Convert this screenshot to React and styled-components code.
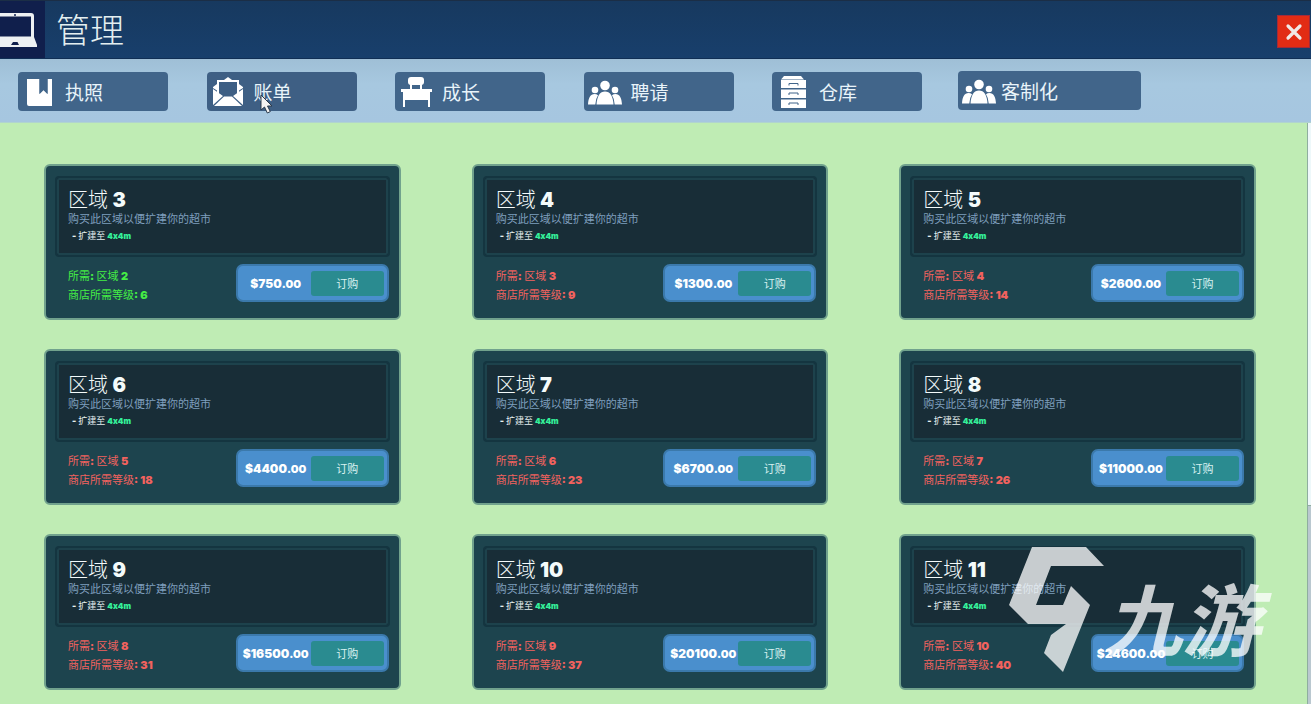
import styled, { createGlobalStyle } from 'styled-components';

const AREAS = [
  { id: 3, level: 6, price: 750, unlocked: true },
  { id: 4, level: 9, price: 1300 },
  { id: 5, level: 14, price: 2600 },
  { id: 6, level: 18, price: 4400 },
  { id: 7, level: 23, price: 6700 },
  { id: 8, level: 26, price: 11000 },
  { id: 9, level: 31, price: 16500 },
  { id: 10, level: 37, price: 20100 },
  { id: 11, level: 40, price: 24600 },
];

const LaptopIcon = () => (
  <LaptopSvg viewBox="0 0 48 36" aria-hidden="true">
    <path
      fillRule="evenodd"
      d="M10 1h32q3 0 3 3v21l3 8v2H1v-2l6-8V4q0-3 3-3zM11 4.500v20h31v-20zM24 30l-2 3h8l-1.500-3z"
    />
    <circle cx="26" cy="3" r="1" fill="#101f4c" />
  </LaptopSvg>
);

const BookIcon = () => (
  <TabSvg viewBox="0 0 34 34" aria-hidden="true">
    <path d="M5 4h12.500v15l4-4 4 4V4h4.500v27H7q-2 0-2-2z" />
    <path d="M17.500 4h8v15l-4-4-4 4z" fill="#41658a" />
  </TabSvg>
);

const MailIcon = () => (
  <TabSvg viewBox="0 0 34 34" aria-hidden="true">
    <path d="M13 5l4-3 4 3z" />
    <path d="M7 19V6h20v13" fill="none" stroke="#fff" strokeWidth="2" />
    <path d="M2 12l4-3v6.500L2 13zM32 12l-4-3v6.500l4-2.500z" />
    <path d="M2 14l10 7L2 30zM32 14l-10 7 10 9z" />
    <path d="M3 31l10-9.500h8L31 31z" />
  </TabSvg>
);

const DeskIcon = () => (
  <TabSvg viewBox="0 0 34 34" aria-hidden="true">
    <rect x="9" y="2" width="16" height="8" rx="3" />
    <path d="M11 9h2v5h-2zM21 9h2v5h-2z" />
    <path d="M2 14h31v3h-2v15h-2v-7H6v7H4V17H2z" />
  </TabSvg>
);

const PeopleIcon = () => (
  <TabSvg viewBox="0 0 34 34" aria-hidden="true">
    <circle cx="17" cy="10.500" r="4.800" />
    <circle cx="7" cy="15" r="3.300" />
    <circle cx="27" cy="15" r="3.300" />
    <path d="M8.500 29.500C9 21 12 16.500 17 16.500s8 4.500 8.500 13z" />
    <path d="M0 29.500C.3 23 2.500 19 6.500 19q2 0 3.500 1.200Q7.400 24 7.300 29.500zM34 29.500C33.700 23 31.500 19 27.500 19q-2 0-3.500 1.200 2.600 3.800 2.700 9.300z" />
  </TabSvg>
);

const CabinetIcon = () => (
  <TabSvg viewBox="0 0 34 34" aria-hidden="true">
    <path d="M8 1h17l3 3.500H5zM5 5h25v8H5zM5 14.500h25v8.500H5zM5 24.500h25V33H5z" />
    <path d="M13 10.500V8.500h9v2M13 20v-2h9v2M13 30v-2h9v2" fill="none" stroke="#41658a" strokeWidth="1" />
  </TabSvg>
);

const TABS = [
  { label: '执照', Icon: BookIcon },
  { label: '账单', Icon: MailIcon, hovered: true },
  { label: '成长', Icon: DeskIcon },
  { label: '聘请', Icon: PeopleIcon },
  { label: '仓库', Icon: CabinetIcon },
];

const AreaCard = ({ area }) => (
  <Card>
    <Summary>
      <CardTitle>
        区域 <Num>{area.id}</Num>
      </CardTitle>
      <Description>购买此区域以便扩建你的超市</Description>
      <Bonus>
        <Num>-</Num> 扩建至 <Size>4x4m</Size>
      </Bonus>
    </Summary>
    <CardFooter>
      <Requirements $unlocked={area.unlocked}>
        <li>
          所需<Num>:</Num> 区域 <Num>{area.id - 1}</Num>
        </li>
        <li>
          商店所需等级<Num>: {area.level}</Num>
        </li>
      </Requirements>
      <Purchase>
        <Price>
          ${area.price}
          <Cents>.00</Cents>
        </Price>
        <OrderButton type="button">订购</OrderButton>
      </Purchase>
    </CardFooter>
  </Card>
);

const App = () => (
  <>
    <GlobalStyle />
    <Page>
      <Header>
        <LogoBox>
          <LaptopIcon />
        </LogoBox>
        <Title>管理</Title>
        <CloseButton type="button" aria-label="关闭">
          <svg viewBox="0 0 18 18" width="18" height="18" aria-hidden="true">
            <path d="M3 3l12 12M15 3L3 15" stroke="#f1e9e6" strokeWidth="3.200" strokeLinecap="round" />
          </svg>
        </CloseButton>
      </Header>
      <Nav>
        <TabGroup>
          {TABS.map(({ label, Icon, hovered }) => (
            <Tab key={label} type="button" $hovered={hovered}>
              <Icon />
              {label}
              {hovered && (
                <Cursor viewBox="0 0 14 20" aria-hidden="true">
                  <path d="M1 1v15l3.500-3 2.800 6 3-1.400-2.800-5.600H12z" />
                </Cursor>
              )}
            </Tab>
          ))}
        </TabGroup>
        <WideTab type="button">
          <PeopleIcon />
          客制化
        </WideTab>
      </Nav>
      <Content>
        <Grid>
          {AREAS.map(area => (
            <AreaCard key={area.id} area={area} />
          ))}
        </Grid>
        <ScrollTrack>
          <ScrollThumb />
        </ScrollTrack>
        <Watermark>
          <WatermarkLogo viewBox="0 0 95 125" aria-hidden="true">
            <path d="M23 0h54l18 19H42L27 58h27l8-19 19 19-27 67-19-19 7-18 15-11H19L0 58z" />
          </WatermarkLogo>
          <WatermarkText>九游</WatermarkText>
        </Watermark>
      </Content>
    </Page>
  </>
);

const GlobalStyle = createGlobalStyle`
  * {
    box-sizing: border-box;
  }
  body {
    margin: 0;
    font-family: 'Noto Sans CJK SC', sans-serif;
    background: #bfecb4;
  }
  h1, h2, p, ul {
    margin: 0;
    padding: 0;
    font-weight: 300;
  }
  button {
    border: 0;
    padding: 0;
    font-family: inherit;
    cursor: pointer;
  }
`;

const Page = styled.div`
  display: flex;
  flex-direction: column;
  min-height: 100vh;
`;

const Header = styled.header`
  display: flex;
  align-items: center;
  height: 59px;
  padding-right: 1px;
  background: linear-gradient(#17395f, #183f6c);
  border-top: 1px solid #1b2e46;
  border-bottom: 1px solid #102f55;
`;

const LogoBox = styled.div`
  display: flex;
  justify-content: flex-end;
  align-items: center;
  width: 45px;
  height: 100%;
  padding-right: 8px;
  overflow: hidden;
  background: #101f4c;
`;

const LaptopSvg = styled.svg`
  flex: none;
  width: 48px;
  height: 36px;
  fill: #eef1f2;
`;

const Title = styled.h1`
  flex: 1;
  padding: 0 0 2px 11px;
  color: #e4eff0;
  font-size: 34px;
  line-height: 54px;
`;

const CloseButton = styled.button`
  display: flex;
  justify-content: center;
  align-items: center;
  width: 33px;
  height: 33px;
  margin-top: 4px;
  background: #e22c14;
  border: 1px solid #a32a3a;
`;

const Nav = styled.nav`
  display: flex;
  align-items: flex-start;
  gap: 36px;
  height: 64px;
  padding: 12px 18px 0;
  background: linear-gradient(#9fbfd6, #a7c8e0 40%, #a6c6e0);
  border-bottom: 1px solid #b0d4cf;
`;

const TabGroup = styled.div`
  display: flex;
  flex: 0 1 904px;
  justify-content: space-between;
  padding-top: 1px;
`;

const Tab = styled.button`
  position: relative;
  display: flex;
  align-items: center;
  gap: 9px;
  width: 150px;
  height: 39px;
  padding-left: 4px;
  border-radius: 4px;
  background: ${({ $hovered }) => ($hovered ? '#3e5f84' : '#41658a')};
  color: #e9f4fa;
  font-size: 19px;
  font-weight: 400;
`;

const WideTab = styled(Tab)`
  gap: 5px;
  width: 183px;
`;

const TabSvg = styled.svg`
  flex: none;
  width: 34px;
  height: 34px;
  fill: #fff;
`;

const Cursor = styled.svg`
  position: absolute;
  top: 22px;
  left: 53px;
  width: 14px;
  height: 20px;
  fill: #f4f4f4;
  stroke: #2b3a4c;
`;

const Content = styled.main`
  position: relative;
  display: flex;
  flex: 1;
`;

const Grid = styled.div`
  display: grid;
  flex: 1;
  grid-template-columns: repeat(3, 1fr);
  align-content: start;
  gap: 29px 71px;
  padding: 41px 51px 14px 44px;
`;

const ScrollTrack = styled.div`
  width: 4px;
  background: #bac8d0;
  border-left: 1px solid #8fae9f;
`;

const ScrollThumb = styled.div`
  height: 66%;
  background: #eef8fa;
  border-bottom: 1px solid #8fae9f;
`;

const Card = styled.article`
  padding: 10px 9px;
  background: #1d444e;
  border: 2px solid #71a28d;
  border-radius: 6px;
`;

const Summary = styled.section`
  height: 81px;
  padding: 10px 11px 0;
  background: #182d37;
  border: 2px solid #143540;
  border-radius: 4px;
  box-shadow: inset 0 0 0 2px #1d424c;
`;

const CardTitle = styled.h2`
  color: #f4fbfb;
  font-size: 20px;
  line-height: 22px;
`;

const Num = styled.span`
  font-family: Inter, sans-serif;
  font-weight: 900;
  line-height: 1;
`;

const Description = styled.p`
  color: #7f9fbe;
  font-size: 11px;
  font-weight: 400;
  line-height: 16px;
`;

const Bonus = styled.p`
  padding-left: 4px;
  color: #e6efef;
  font-size: 9px;
  font-weight: 400;
  line-height: 20px;
`;

const Size = styled(Num)`
  color: #35f09a;
  font-size: 8px;
`;

const CardFooter = styled.footer`
  display: flex;
  justify-content: space-between;
  align-items: flex-start;
  padding: 7px 1px 4px 13px;
`;

const Requirements = styled.ul`
  padding-top: 2px;
  list-style: none;
  color: ${({ $unlocked }) => ($unlocked ? '#45ee45' : '#f2625e')};
  font-size: 11px;
  font-weight: 400;
  line-height: 19px;
`;

const Purchase = styled.div`
  display: flex;
  align-items: center;
  width: 153px;
  height: 38px;
  padding: 0 3px;
  background: #4a8fcd;
  border: 2px solid #3b79ab;
  border-radius: 7px;
`;

const Price = styled.span`
  flex: 1;
  color: #fff;
  font-family: Inter, sans-serif;
  font-size: 12px;
  font-weight: 900;
  text-align: center;
  white-space: nowrap;
`;

const Cents = styled.small`
  font-size: 11px;
`;

const OrderButton = styled.button`
  flex: none;
  width: 73px;
  height: 25px;
  border-radius: 3px;
  background: #2a8b90;
  color: #d9f1f0;
  font-size: 11px;
`;

const Watermark = styled.div`
  position: absolute;
  right: 51px;
  bottom: 32px;
  display: flex;
  align-items: center;
  color: #fff;
  opacity: 0.76;
  pointer-events: none;
`;

const WatermarkLogo = styled.svg`
  width: 95px;
  height: 125px;
  fill: currentColor;
`;

const WatermarkText = styled.strong`
  padding-top: 12px;
  font-size: 78px;
  font-style: italic;
  font-weight: 700;
  line-height: 80px;
`;

export default App;
